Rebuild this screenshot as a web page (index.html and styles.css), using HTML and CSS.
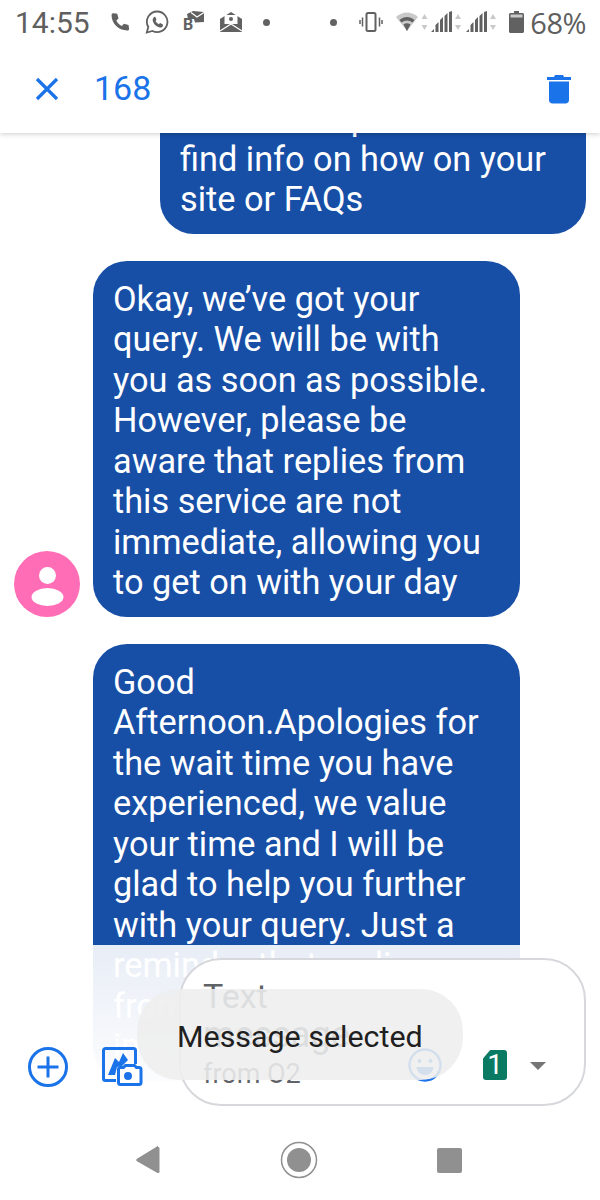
FILE: index.html
```html
<!DOCTYPE html>
<html lang="en">
<head>
    <meta charset="UTF-8">
    <meta name="viewport" content="width=device-width, initial-scale=1.0">
    <title>Messages</title>
    <link rel="stylesheet" href="styles.css">
</head>
<body>
    <div class="screen">
        <div class="status-bar">
            <div class="status-left">
                <span class="clock">14:55</span>
                <svg class="st-phone" width="22" height="22" viewBox="0 0 24 24"><path d="M5 2.500l4 .6 1.400 5-2.400 2.200c1.300 2.800 3.200 4.700 6 6l2.300-2.400 5 1.400.6 4c.1 1-.6 2-1.700 2C10.500 21.500 2.500 13.500 2.800 4.200 2.900 3.100 4 2.400 5 2.500z" fill="#616161"/></svg>
                <svg class="st-icon" width="24" height="24" viewBox="0 0 24 24"><path d="M12.200 1.500A10.300 10.300 0 0 0 3.300 17L1.800 22.500l5.700-1.500A10.300 10.300 0 1 0 12.200 1.500z" fill="none" stroke="#616161" stroke-width="1.800"/><path d="M8.800 6.800l1.500 0 1.200 2.900-1 1.400c.8 1.500 1.800 2.400 3.300 3.200l1.300-1.200 2.800 1.300v1.500c-.5 1.200-2 1.800-3.200 1.500-3.500-.8-6.300-3.600-7-6.900-.3-1.300.8-3.300 2.100-3.700z" fill="#616161"/></svg>
                <svg class="st-icon" width="22" height="22" viewBox="0 0 22 22"><path d="M4 3l6-3 11 1v10l-9 .5-1-3.500H5z" fill="#616161"/><path d="M8 1.500l6 4.500 7-4.500" fill="none" stroke="#fff" stroke-width="1.200"/><text class="st-b" x="0" y="19">B</text></svg>
                <svg class="st-icon" width="24" height="22" viewBox="0 0 24 22"><path d="M1 8l11-7 11 7v13H1z" fill="#616161"/><rect x="5.500" y="4" width="13" height="9" fill="#fff"/><circle cx="12" cy="8" r="2" fill="#616161"/><path d="M1 20l11-7 11 7" fill="none" stroke="#fff" stroke-width="1.300"/></svg>
                <span class="st-dot st-dot-left"></span>
            </div>
            <div class="status-right">
                <span class="st-dot"></span>
                <svg class="st-vibrate" width="24" height="20" viewBox="0 0 24 20"><rect x="7.500" y="1" width="9" height="18" rx="1.500" fill="none" stroke="#616161" stroke-width="2"/><path d="M3.500 5.500v9M1 8v4M20.500 5.500v9M23 8v4" stroke="#616161" stroke-width="1.500"/></svg>
                <svg class="st-wifi" width="32" height="20" viewBox="0 0 32 20"><path d="M0 5C6-1 16-1 22 5l-11 14z" fill="#c9c9c9"/><path d="M3.500 8c4.500-4 10.500-4 15 0l-2 2.500c-3.500-2.800-7.500-2.800-11 0zM7.500 12.500c2.300-1.800 4.700-1.800 7 0L11 19z" fill="#616161"/><path d="M28.500 2l-3 5h6zM28.500 18l-3-5h6z" fill="#c9c9c9"/></svg>
                <svg class="st-signal" width="32" height="22" viewBox="0 0 32 22"><path d="M0 21l3-3v3zM4.500 21v-7l3-3v10zM9 21V9l3-3v15zM13.500 21V5l3-3v19zM18 21V1l3-1v21z" fill="#616161"/><path d="M27 3l-3 5h6zM27 19l-3-5h6z" fill="#c9c9c9"/></svg>
                <svg class="st-signal" width="32" height="22" viewBox="0 0 32 22"><path d="M0 21l3-3v3zM4.500 21v-7l3-3v10zM9 21V9l3-3v15zM13.500 21V5l3-3v19zM18 21V1l3-1v21z" fill="#616161"/><path d="M27 3l-3 5h6zM27 19l-3-5h6z" fill="#c9c9c9"/></svg>
                <svg class="st-battery" width="15" height="22" viewBox="0 0 15 22"><path d="M5 0h5v2h3.500c.8 0 1.500.7 1.500 1.500V20.500c0 .8-.7 1.500-1.500 1.500h-12C.7 22 0 21.300 0 20.500V3.500C0 2.700.7 2 1.500 2H5z" fill="#616161"/><rect x="1.500" y="3.500" width="12" height="3" fill="#c9c9c9"/></svg>
                <span class="battery-pct">68%</span>
            </div>
        </div>

        <header class="app-bar">
            <svg class="close-icon" width="24" height="24" viewBox="0 0 24 24"><path d="M2 2l20 20M22 2L2 22" stroke="#1a73e8" stroke-width="3.200"/></svg>
            <span class="selected-count">168</span>
            <svg class="trash-icon" width="24" height="30" viewBox="0 0 24 30"><path d="M8 1h8l1 2h7v3H0V3h7z" fill="#1a73e8"/><path d="M2 7.500h20V26c0 2-1.500 3.500-3.500 3.500h-13C3.500 29.500 2 28 2 26z" fill="#1a73e8"/></svg>
        </header>

        <main class="thread">
            <div class="row row-sent">
                <div class="bubble bubble-sent">I'd need help as I can't<br>find info on how on your<br>site or FAQs</div>
            </div>
            <div class="row row-received">
                <div class="avatar">
                    <svg width="66" height="66" viewBox="0 0 66 66"><circle cx="33" cy="33" r="33" fill="#ff6db6"/><circle cx="33.500" cy="24.500" r="8.500" fill="#fff"/><ellipse cx="33.500" cy="46" rx="16" ry="9" fill="#fff"/></svg>
                </div>
                <div class="bubble">Okay, we’ve got your<br>query. We will be with<br>you as soon as possible.<br>However, please be<br>aware that replies from<br>this service are not<br>immediate, allowing you<br>to get on with your day</div>
            </div>
            <div class="row row-received row-last">
                <div class="avatar-space"></div>
                <div class="bubble">Good<br>Afternoon.Apologies for<br>the wait time you have<br>experienced, we value<br>your time and I will be<br>glad to help you further<br>with your query. Just a<br>reminder that replies<br>from this service are<br>immediate, and you can</div>
            </div>
        </main>

        <div class="compose-fade"></div>
        <div class="compose">
            <svg class="plus-icon" width="40" height="40" viewBox="0 0 40 40"><circle cx="20" cy="20" r="18.500" fill="none" stroke="#1a73e8" stroke-width="3"/><path d="M20 9.500v21M9.500 20h21" stroke="#1a73e8" stroke-width="3"/></svg>
            <svg class="gallery-icon" width="42" height="42" viewBox="0 0 42 42"><path d="M15 35.500H4.500a2 2 0 0 1-2-2V5.500a2 2 0 0 1 2-2h28a2 2 0 0 1 2 2V19" fill="none" stroke="#1a73e8" stroke-width="3"/><path d="M7 30l7-17 4 4 4-9 5 7-6 6-5 1-2 8z" fill="#1a73e8"/><path d="M19.500 22.500h3l2-2h9l2 2h2.500a2 2 0 0 1 2 2v13a2 2 0 0 1-2 2H19.500a2 2 0 0 1-2-2v-13a2 2 0 0 1 2-2z" fill="#fff" stroke="#1a73e8" stroke-width="3"/><circle cx="27" cy="31" r="4" fill="#1a73e8"/></svg>
            <div class="compose-box">
                <div class="placeholder">
                    <span class="ph-large">Text</span>
                    <span class="ph-wide">message</span>
                    <span class="ph-small">from O2</span>
                </div>
                <svg class="emoji-icon" width="34" height="34" viewBox="0 0 34 34"><circle cx="17" cy="17" r="15.500" fill="none" stroke="#1a73e8" stroke-width="2.500"/><circle cx="11.500" cy="13" r="2" fill="#1a73e8"/><circle cx="22.500" cy="13" r="2" fill="#1a73e8"/><path d="M8.500 19h17c-.5 5-4 8-8.500 8s-8-3-8.500-8z" fill="#1a73e8"/></svg>
                <div class="sim-badge">1</div>
                <span class="sim-caret"></span>
            </div>
        </div>
        <div class="toast">Message selected</div>

        <nav class="nav-bar">
            <svg width="24" height="28" viewBox="0 0 24 28"><path d="M22 1c1 0 1.500.5 1.500 1.500v23c0 1-.5 1.500-1.500 1.500-.3 0-.6-.1-1-.3L1 15.300c-1-.7-1-1.900 0-2.600L21 .4c.4-.2.700-.4 1-.4z" fill="#909090"/></svg>
            <svg width="38" height="38" viewBox="0 0 38 38"><circle cx="19" cy="19" r="17.500" fill="none" stroke="#909090" stroke-width="1.500"/><circle cx="19" cy="19" r="12" fill="#909090"/></svg>
            <span class="nav-square"></span>
        </nav>
    </div>
</body>
</html>
```

FILE: styles.css
```css
body {
    margin: 0;
    background-color: #fff;
    font-family: Roboto, "Liberation Sans", sans-serif;
}
.screen {
    position: relative;
    width: 600px;
    height: 1200px;
    overflow: hidden;
    display: flex;
    flex-direction: column;
    background-color: #fff;
}

/* status bar */
.status-bar {
    position: relative;
    z-index: 3;
    height: 44px;
    display: flex;
    justify-content: space-between;
    align-items: center;
    color: #5f5f5f;
    background-color: #fff;
}
.status-left, .status-right { display: flex; align-items: center; }
.status-left { padding-left: 15px; }
.status-right { padding-right: 14px; }
.clock { font-size: 30px; width: 75px; }
.st-phone { margin-left: 19px; }
.st-icon { margin-left: 14px; }
.st-b { font-family: Roboto, sans-serif; font-size: 16px; font-weight: 700; fill: #616161; }
.st-dot { width: 7px; height: 7px; border-radius: 50%; background-color: #616161; }
.st-dot-left { margin-left: 20px; }
.st-vibrate { margin-left: 22px; }
.st-wifi { margin-left: 13px; }
.st-signal { margin-left: 3px; }
.st-battery { margin-left: 11px; }
.battery-pct { font-size: 29px; margin-left: 6px; font-family: "Open Sans", sans-serif; letter-spacing: -0.5px; }

/* selection bar */
.app-bar {
    position: relative;
    z-index: 2;
    height: 89px;
    display: flex;
    align-items: center;
    background-color: #fff;
    box-shadow: 0 1px 5px rgba(0,0,0,0.2);
    padding: 0 29px 0 35px;
}
.selected-count { font-size: 34px; color: #1a73e8; margin-left: 35px; padding-bottom: 2px; flex: 1; }

/* messages */
.thread {
    flex: 1;
    min-height: 0;
    overflow: hidden;
}
.row { display: flex; align-items: flex-end; }
.row-sent { justify-content: flex-end; padding-right: 14px; margin-top: -53px; }
.row-received { padding-left: 14px; margin-top: 27px; gap: 13px; }
.avatar { width: 66px; height: 66px; }
.avatar-space { width: 66px; flex-shrink: 0; }
.bubble {
    width: 386px;
    padding: 18px 21px 14px 20px;
    border-radius: 34px;
    background-color: #174ea6;
    color: #fff;
    font-size: 34.3px;
    line-height: 40.5px;
}
.bubble-sent { width: 385px; }

/* compose area */
.compose-fade {
    position: absolute;
    left: 0;
    right: 0;
    top: 945px;
    height: 175px;
    background: linear-gradient(rgba(255,255,255,0.9), #fff 90%);
}
.compose {
    position: absolute;
    left: 28px;
    right: 14px;
    top: 958px;
    height: 148px;
    display: flex;
    align-items: flex-end;
}
.plus-icon { margin-bottom: 19px; }
.gallery-icon { margin-left: 33px; margin-bottom: 19px; }
.compose-box {
    position: relative;
    margin-left: 36px;
    flex: 1;
    height: 100%;
    box-sizing: border-box;
    border: 2px solid #d6d8db;
    border-radius: 42px;
    background-color: #fff;
    display: flex;
    align-items: flex-end;
    padding: 0 38px 24px 23px;
}
.placeholder {
    position: absolute;
    left: 22px;
    top: 17px;
    color: #5f6368;
}
.placeholder span { display: block; line-height: 39px; }
.ph-large { font-size: 34px; }
.ph-wide { font-size: 36px; }
.ph-small { font-size: 27px; }
.emoji-icon { margin-left: auto; margin-bottom: -2px; }
.sim-badge {
    width: 24px;
    height: 30px;
    margin-left: 41px;
    background-color: #0b7a63;
    border-radius: 3px;
    clip-path: polygon(30% 0, 100% 0, 100% 100%, 0 100%, 0 28%);
    color: #fff;
    font-size: 28px;
    line-height: 30px;
    text-align: center;
}
.sim-caret {
    margin-left: 23px;
    margin-bottom: 10px;
    border-left: 8px solid transparent;
    border-right: 8px solid transparent;
    border-top: 8px solid #757575;
}

.toast {
    position: absolute;
    left: 137px;
    top: 989px;
    width: 326px;
    height: 91px;
    box-sizing: border-box;
    padding: 3px 0 0 40px;
    display: flex;
    align-items: center;
    border-radius: 42px;
    background-color: rgba(238,238,238,0.88);
    color: #202020;
    font-size: 30.400px;
}

/* nav buttons */
.nav-bar {
    position: relative;
    height: 80px;
    display: flex;
    align-items: center;
    padding-left: 136px;
    padding-right: 138px;
    justify-content: space-between;
}
.nav-square { width: 25px; height: 25px; border-radius: 2px; background-color: #909090; }
```
